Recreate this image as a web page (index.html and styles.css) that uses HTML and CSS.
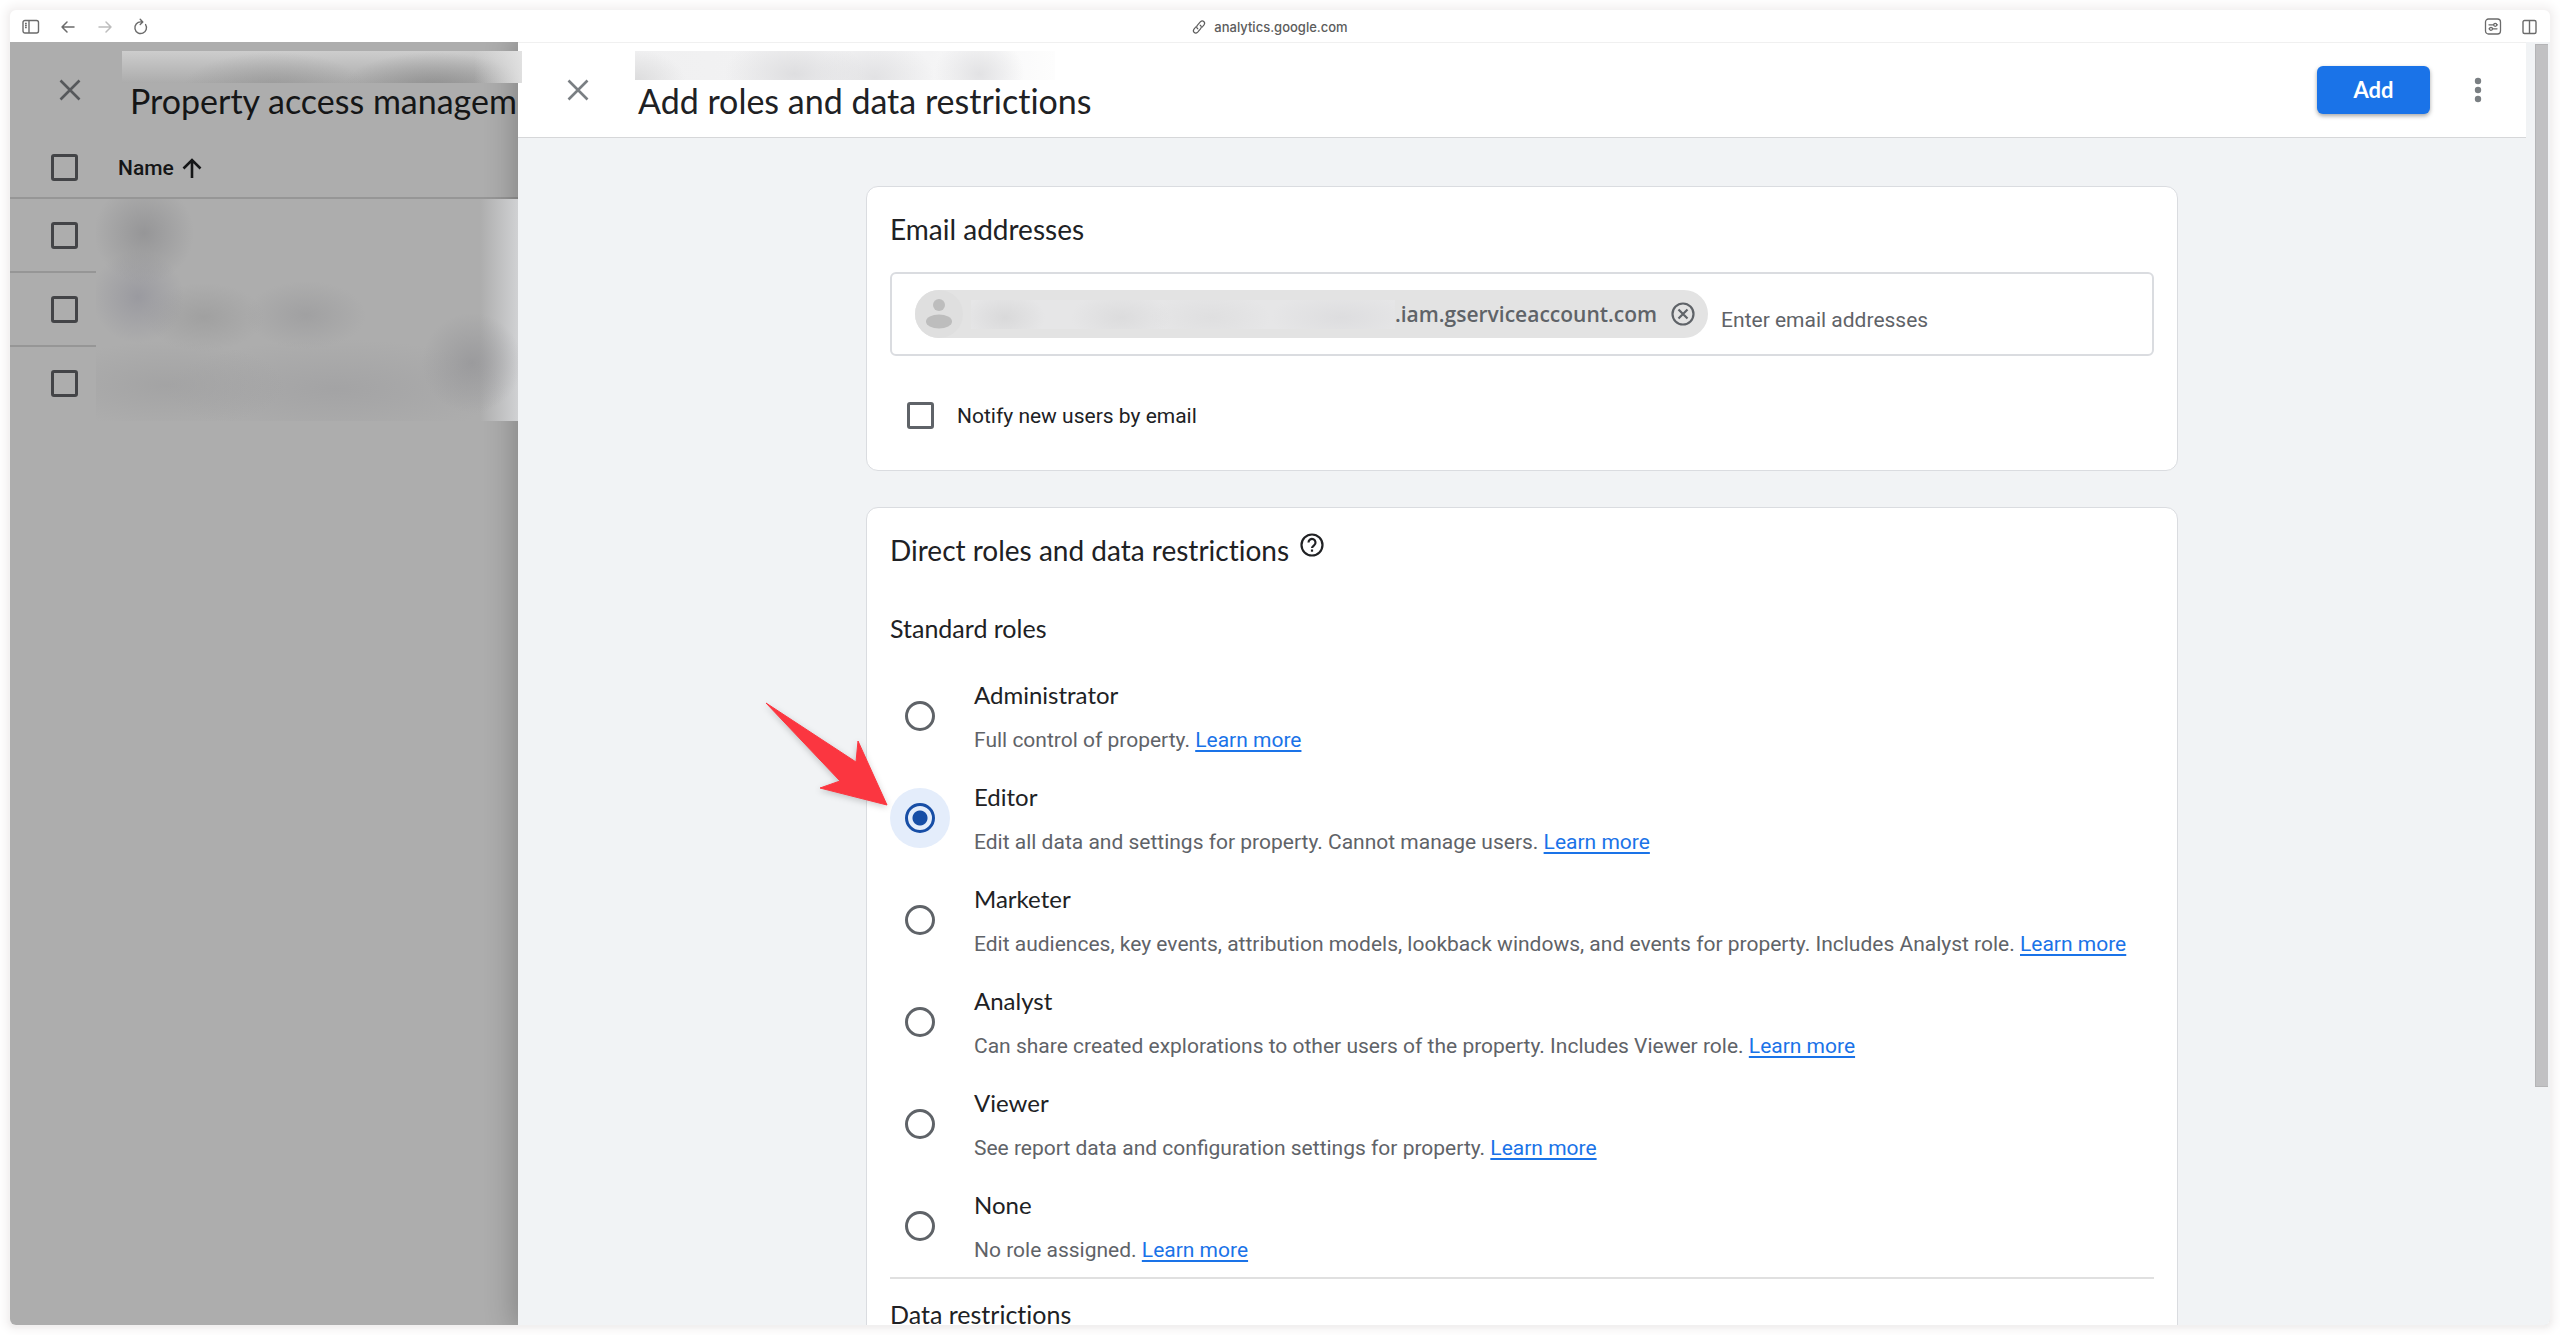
FILE: index.html
```html
<!DOCTYPE html>
<html lang="en">
<head>
<meta charset="utf-8">
<meta name="viewport" content="width=device-width, initial-scale=1">
<title>Add roles and data restrictions</title>
<link rel="stylesheet" href="styles.css">
</head>
<body>
<div class="window">
  <header class="toolbar">
    <div class="toolbar-group">
      <button class="tool" aria-label="Sidebar"><svg width="18" height="16" viewBox="0 0 18 16" fill="none" stroke="currentColor" stroke-width="1.4"><rect x="1" y="1.500" width="15.500" height="12.500" rx="2"/><path d="M7 1.500v12.500M3 4.500h1.800M3 6.500h1.800M3 8.500h1.800"/></svg></button>
      <button class="tool" aria-label="Back"><svg width="18" height="16" viewBox="0 0 18 16" fill="none" stroke="currentColor" stroke-width="1.5" stroke-linecap="round" stroke-linejoin="round"><path d="M15 8H3M8 3L3 8l5 5"/></svg></button>
      <button class="tool tool-off" aria-label="Forward"><svg width="18" height="16" viewBox="0 0 18 16" fill="none" stroke="currentColor" stroke-width="1.5" stroke-linecap="round" stroke-linejoin="round"><path d="M3 8h12M10 3l5 5-5 5"/></svg></button>
      <button class="tool" aria-label="Reload"><svg width="16" height="18" viewBox="0 0 16 18" fill="none" stroke="currentColor" stroke-width="1.4" stroke-linecap="round" stroke-linejoin="round"><path d="M12.600 6.600a5.800 5.800 0 1 1-4.900-2.700h2M7.200 1.200L9.800 3.900 7.200 6.600"/></svg></button>
    </div>
    <a class="address" href="#"><svg width="16" height="16" viewBox="0 0 16 16" fill="none" stroke="currentColor" stroke-width="1.2" stroke-linecap="round"><path d="M6.800 9.800C5.200 8.700 5.600 7.200 6.500 6.200l2.800-3.300c2.400-2.400 5.600.3 3.700 2.900L11.300 8M9.200 6.200c1.600 1.100 1.200 2.600.3 3.600l-2.800 3.300c-2.400 2.400-5.600-.3-3.700-2.900L4.700 8"/></svg>analytics.google.com</a>
    <div class="toolbar-group toolbar-right">
      <button class="tool" aria-label="Page settings"><svg width="18" height="18" viewBox="0 0 18 18" fill="none" stroke="currentColor" stroke-width="1.3" stroke-linecap="round"><rect x="1.500" y="1" width="15" height="15" rx="3"/><path d="M5 6.800h4.500M13 6.800h.5M5 10.800h.5M8.500 10.800h4.500"/><circle cx="11.200" cy="6.800" r="1.500"/><circle cx="7" cy="10.800" r="1.500"/></svg></button>
      <button class="tool" aria-label="Split view"><svg width="16" height="16" viewBox="0 0 16 16" fill="none" stroke="currentColor" stroke-width="1.4"><rect x="2" y="1.500" width="13" height="13" rx="1.500"/><path d="M8.500 1.500v13"/></svg></button>
    </div>
  </header>

  <div class="panes">
    <section class="back-pane">
      <div class="pane-head">
        <button class="icon-btn" aria-label="Close list"><svg width="24" height="24" viewBox="0 0 24 24" stroke="currentColor" stroke-width="2.600"><path d="M2.500 2.500l19 19M21.500 2.500l-19 19"/></svg></button>
        <div class="back-titles">
          <div class="mask mask-back"></div>
          <h2 class="pane-title back-title">Property access management</h2>
        </div>
      </div>
      <table class="users">
        <thead>
          <tr>
            <th class="pick"><input class="tick" type="checkbox" aria-label="Select all"></th>
            <th class="name"><span class="sort">Name<svg width="20" height="20" viewBox="0 0 20 20" fill="none" stroke="currentColor" stroke-width="2.600"><path d="M10 20V2M1.500 10.500L10 2l8.500 8.500"/></svg></span></th>
          </tr>
        </thead>
        <tbody>
          <tr><td class="pick"><input class="tick" type="checkbox" aria-label="Select user 1"></td><td class="masked" rowspan="3"></td></tr>
          <tr><td class="pick"><input class="tick" type="checkbox" aria-label="Select user 2"></td></tr>
          <tr><td class="pick"><input class="tick" type="checkbox" aria-label="Select user 3"></td></tr>
        </tbody>
      </table>
    </section>

    <main class="front-pane">
      <div class="sheet">
        <div class="pane-head front-head">
          <button class="icon-btn" aria-label="Close"><svg width="24" height="24" viewBox="0 0 24 24" stroke="currentColor" stroke-width="2.600"><path d="M2.500 2.500l19 19M21.500 2.500l-19 19"/></svg></button>
          <div class="front-titles">
            <div class="mask mask-front"></div>
            <h1 class="pane-title">Add roles and data restrictions</h1>
          </div>
          <button class="add">Add</button>
          <button class="icon-btn more" aria-label="More"><svg width="8" height="28" viewBox="0 0 8 28" fill="currentColor"><circle cx="4" cy="5" r="3.200"/><circle cx="4" cy="14" r="3.200"/><circle cx="4" cy="23" r="3.200"/></svg></button>
        </div>

        <form class="content">
          <section class="card email-card">
            <h2 class="card-title">Email addresses</h2>
            <div class="email-box">
              <span class="chip">
                <svg class="avatar" width="48" height="48" viewBox="0 0 48 48"><circle cx="24" cy="24" r="24" fill="#dfdfdf"/><circle cx="24" cy="15" r="6" fill="#bdbdbd"/><ellipse cx="24" cy="31.500" rx="13" ry="7" fill="#bdbdbd"/></svg>
                <span class="mask-chip"></span>
                <span>.iam.gserviceaccount.com</span>
                <button class="remove" type="button" aria-label="Remove"><svg width="26" height="26" viewBox="0 0 26 26" fill="none" stroke="currentColor" stroke-width="2.200"><circle cx="13" cy="13" r="10.500"/><path d="M8.500 8.500l9 9M17.500 8.500l-9 9"/></svg></button>
              </span>
              <input class="email-input" type="text" placeholder="Enter email addresses" aria-label="Enter email addresses">
            </div>
            <label class="notify"><input class="tick" type="checkbox">Notify new users by email</label>
          </section>

          <section class="card roles-card">
            <h2 class="card-title with-help">Direct roles and data restrictions
              <button class="help" type="button" aria-label="Help"><svg width="26" height="26" viewBox="0 0 26 26" fill="none" stroke="currentColor" stroke-width="2.200"><circle cx="13" cy="13" r="10.500"/><path d="M9.500 10.500a3.500 3.500 0 1 1 5.700 2.700c-1.300 1-2.200 1.500-2.200 2.900"/><path d="M13 17.500v2.200"/></svg></button>
            </h2>
            <h3 class="group-title">Standard roles</h3>
            <div class="roles">
              <div class="role">
                <span class="dot"><input class="radio" type="radio" name="role" id="admin"></span>
                <div class="role-text"><label class="role-name" for="admin">Administrator</label><p class="role-note">Full control of property. <a href="#">Learn more</a></p></div>
              </div>
              <div class="role">
                <span class="dot dot-on"><input class="radio" type="radio" name="role" id="editor" checked></span>
                <div class="role-text"><label class="role-name" for="editor">Editor</label><p class="role-note">Edit all data and settings for property. Cannot manage users. <a href="#">Learn more</a></p></div>
                <svg class="pointer" width="132" height="112" viewBox="0 0 132 112"><path d="M6 4L96 63 98 42 127 106 60 89 80 82Z" fill="#fb3640" stroke="#fb3640" stroke-linejoin="round"/></svg>
              </div>
              <div class="role">
                <span class="dot"><input class="radio" type="radio" name="role" id="marketer"></span>
                <div class="role-text"><label class="role-name" for="marketer">Marketer</label><p class="role-note">Edit audiences, key events, attribution models, lookback windows, and events for property. Includes Analyst role. <a href="#">Learn more</a></p></div>
              </div>
              <div class="role">
                <span class="dot"><input class="radio" type="radio" name="role" id="analyst"></span>
                <div class="role-text"><label class="role-name" for="analyst">Analyst</label><p class="role-note">Can share created explorations to other users of the property. Includes Viewer role. <a href="#">Learn more</a></p></div>
              </div>
              <div class="role">
                <span class="dot"><input class="radio" type="radio" name="role" id="viewer"></span>
                <div class="role-text"><label class="role-name" for="viewer">Viewer</label><p class="role-note">See report data and configuration settings for property. <a href="#">Learn more</a></p></div>
              </div>
              <div class="role">
                <span class="dot"><input class="radio" type="radio" name="role" id="none"></span>
                <div class="role-text"><label class="role-name" for="none">None</label><p class="role-note">No role assigned. <a href="#">Learn more</a></p></div>
              </div>
            </div>
            <h3 class="group-title next-group">Data restrictions</h3>
          </section>
        </form>
      </div>
      <div class="scroll-track"><div class="scroll-thumb"></div></div>
    </main>
  </div>
</div>
</body>
</html>
```
FILE: styles.css
```css
* { box-sizing: border-box; }

body {
  margin: 0;
  padding: 10px;
  height: 100vh;
  overflow: hidden;
  background: #fff;
  font-family: Roboto, "Liberation Sans", sans-serif;
  font-size: 21px;
  color: #202124;
}

h1, h2, h3, p { margin: 0; font-weight: 400; }

button {
  padding: 0;
  border: 0;
  background: none;
  font: inherit;
  color: inherit;
}

svg { display: block; flex: none; }

.window {
  display: flex;
  flex-direction: column;
  height: 100%;
  overflow: hidden;
  border-radius: 6px;
  background: #fff;
  box-shadow: 0 0 8px 6px #f6f4f4, 0 1px 4px rgba(0, 0, 0, 0.35);
}

/* Browser toolbar */
.toolbar {
  display: grid;
  grid-template-columns: 1fr auto 1fr;
  align-items: center;
  flex: none;
  height: 32px;
  padding: 2px 13px 0 12px;
  color: #6b6b6b;
}

.toolbar-group { display: flex; align-items: center; gap: 19px; }
.toolbar-right { justify-content: flex-end; }
.tool-off { color: #bdbdbd; }

.address {
  display: flex;
  align-items: center;
  gap: 7px;
  padding-right: 20px;
  font: 500 13px/16px Inter, sans-serif;
  color: #5c5c5c;
  text-decoration: none;
}

/* Panes */
.panes {
  display: grid;
  grid-template-columns: 20% minmax(0, 1fr);
  flex: 1;
  min-height: 0;
}

.back-pane { background: #adadad; color: #151617; min-width: 0; }

.front-pane {
  position: relative;
  z-index: 1;
  display: flex;
  min-width: 0;
  min-height: 0;
  background: #f1f3f5;
  box-shadow: 0 0 28px 4px rgba(0, 0, 0, 0.24);
  clip-path: inset(0 0 0 -80px);
}

.pane-head {
  display: flex;
  align-items: flex-start;
  height: 96px;
  padding: 9px 0 0 40px;
}

.icon-btn {
  display: grid;
  place-items: center;
  flex: none;
  width: 40px;
  height: 40px;
  margin-top: 19px;
  color: #7a7f83;
}

.back-pane .icon-btn { color: #56585b; }

.pane-title {
  font: 400 34px/42px Lato, sans-serif;
  white-space: nowrap;
}

.back-titles { flex: 1; min-width: 0; margin-left: 32px; }
.back-title { padding-left: 8px; overflow: hidden; }
.front-titles { flex: 1; min-width: 0; margin-left: 37px; }
.front-titles .pane-title { padding-left: 3px; }

.mask-back {
  position: relative;
  z-index: 2;
  height: 32px;
  margin: 0 -4px -3px 0;
  background:
    linear-gradient(90deg, transparent 88%, rgba(228, 228, 228, 0.9)),
    radial-gradient(ellipse 90px 34px at 38% 110%, rgba(145, 145, 145, 0.6), transparent),
    radial-gradient(ellipse 90px 34px at 78% 110%, rgba(135, 135, 135, 0.7), transparent),
    linear-gradient(#cdcdcd, #acacac);
}

.mask-front {
  width: 420px;
  max-width: 100%;
  height: 29px;
  background:
    radial-gradient(ellipse 50px 30px at 0 100%, #dcdcdd, transparent),
    radial-gradient(ellipse 70px 40px at 38% 80%, #dedee0, transparent),
    radial-gradient(ellipse 60px 40px at 57% 90%, #e2e2e4, transparent),
    radial-gradient(ellipse 45px 40px at 82% 80%, #e2e2e4, transparent),
    linear-gradient(90deg, #f0f0f1, #f4f4f5 70%, #fdfdfd);
}

/* User list */
.users { width: 100%; border-collapse: separate; border-spacing: 0; }
.users th, .users td { padding: 0; text-align: left; font-weight: 500; }
.users th { height: 61px; border-bottom: 2px solid #969696; }
.users td.pick { height: 74px; border-bottom: 2px solid #969696; }
.users tr:last-child td.pick { border-color: transparent; }
.pick { width: 86px; }
.pick .tick { margin-left: 41px; }
.users th.name { padding-left: 22px; }
.sort { display: flex; align-items: center; gap: 8px; }

.users .masked {
  position: relative;
  z-index: 2;
  background:
    radial-gradient(circle 50px at 48px 34px, rgba(144, 144, 146, 0.8), transparent),
    radial-gradient(circle 46px at 42px 98px, rgba(146, 146, 154, 0.7), transparent),
    radial-gradient(ellipse 60px 34px at 108px 118px, rgba(152, 152, 152, 0.6), transparent),
    radial-gradient(ellipse 60px 34px at 210px 116px, rgba(152, 152, 154, 0.6), transparent),
    radial-gradient(circle 50px at 376px 164px, rgba(147, 147, 150, 0.7), transparent),
    radial-gradient(ellipse 120px 44px at 70px 186px, rgba(157, 157, 158, 0.6), transparent),
    radial-gradient(ellipse 170px 50px at 240px 190px, rgba(157, 157, 159, 0.6), transparent),
    linear-gradient(90deg, #adadad 91%, #d0d1d3);
}

.tick {
  appearance: none;
  display: block;
  flex: none;
  width: 27px;
  height: 27px;
  margin: 0;
  border: 3px solid #5f6368;
  border-radius: 3px;
}

.back-pane .tick { border-color: #434447; }

/* Front sheet */
.sheet {
  display: flex;
  flex-direction: column;
  flex: 1;
  min-width: 0;
  overflow: hidden;
}

.front-head {
  flex: none;
  padding-right: 28px;
  background: #fff;
  border-top: 1px solid #f0f0f0;
  border-bottom: 1px solid #d6d7d9;
  padding-top: 8px;
}

.add {
  width: 113px;
  height: 48px;
  margin-top: 15px;
  border-radius: 6px;
  background: #1a73e8;
  box-shadow: 0 2px 4px rgba(0, 0, 0, 0.35);
  color: #fff;
  font: 700 22px/46px Lato, sans-serif;
}

.more { margin-left: 28px; }

.content {
  display: flex;
  flex-direction: column;
  gap: 36px;
  width: 100%;
  max-width: 1312px;
  margin: 48px auto 0;
}

.card {
  flex: none;
  padding: 24px 23px 40px;
  border: 1px solid #dadce0;
  border-radius: 12px;
  background: #fff;
}

.card-title { font: 400 28px/36px Lato, sans-serif; }
.with-help { display: flex; align-items: flex-start; gap: 10px; }

.email-box {
  display: flex;
  align-items: center;
  height: 84px;
  margin-top: 25px;
  padding: 0 23px;
  border: 2px solid #dadce0;
  border-radius: 6px;
}

.chip {
  display: flex;
  align-items: center;
  height: 48px;
  padding-right: 12px;
  border-radius: 24px;
  background: #e3e3e3;
  color: #5f6368;
  font: 600 21px/24px "Open Sans", sans-serif;
}

.mask-chip {
  width: 424px;
  height: 29px;
  margin-left: 8px;
  background:
    radial-gradient(ellipse 40px 26px at 34px 60%, #d9d9da, transparent),
    radial-gradient(ellipse 50px 26px at 150px 60%, #dcdcdd, transparent),
    radial-gradient(ellipse 60px 26px at 240px 60%, #dfdfe0, transparent),
    radial-gradient(ellipse 70px 26px at 370px 60%, #dddddf, transparent),
    #e6e6e7;
}

.remove { margin-left: 13px; }

.email-input {
  flex: 1;
  min-width: 0;
  height: 48px;
  margin-top: 12px;
  padding: 0 0 0 13px;
  border: 0;
  outline: 0;
  background: none;
  font: 400 21px/24px Roboto, sans-serif;
}

.email-input::placeholder { color: #5f6368; opacity: 1; }

.notify {
  display: flex;
  align-items: center;
  gap: 23px;
  margin-top: 46px;
  padding: 0 0 1px 17px;
}

.group-title { margin-top: 44px; font: 400 25px/32px Lato, sans-serif; }

.pane-title, .card-title, .group-title { font-variant-ligatures: none; }

.roles { margin-top: 21px; border-bottom: 2px solid #e0e0e0; }

.role {
  position: relative;
  display: flex;
  align-items: center;
  gap: 24px;
  min-height: 102px;
}

.dot {
  display: grid;
  place-items: center;
  flex: none;
  width: 60px;
  height: 60px;
  border-radius: 50%;
}

.dot-on { background: #e4edfb; }

.radio {
  appearance: none;
  width: 30px;
  height: 30px;
  margin: 0;
  border: 3px solid #5f6368;
  border-radius: 50%;
}

.radio:checked {
  border-color: #174ea6;
  background: radial-gradient(circle, #174ea6 7px, transparent 8px);
}

.role-text { padding-top: 3px; }
.role-name { display: block; font: 400 24px/44px Lato, sans-serif; }
.role-note { line-height: 46px; color: #5f6368; }
.role-note a { color: #1a73e8; text-underline-offset: 3px; text-decoration-thickness: 2px; }

/* Arrow laid over the card edge, pointing at the chosen role */
.pointer {
  position: absolute;
  left: -130px;
  top: -68px;
  filter: drop-shadow(0 2px 3px rgba(0, 0, 0, 0.2));
}

.next-group { margin-top: 19px; }

.scroll-track { flex: none; width: 24px; padding: 2px 2px 0 9px; }

.scroll-thumb {
  height: 81.4%;
  background: #c1c1c3;
  border: 1px solid #b4b4b6;
  border-right: 0;
}
```
